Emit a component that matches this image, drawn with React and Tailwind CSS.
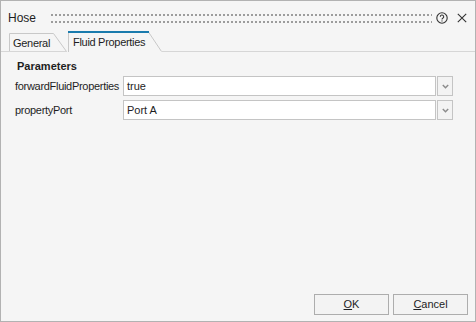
import React from 'react';

const Grip = () => (
  <svg className="block w-full h-[9px]">
    <defs>
      <pattern id="grip" width="4" height="7" patternUnits="userSpaceOnUse">
        <rect width="2" height="2" fill="#9c9c9c" />
      </pattern>
    </defs>
    <rect width="100%" height="9" fill="url(#grip)" />
  </svg>
);

const HelpIcon = () => (
  <svg width="12" height="12" viewBox="0 0 12 12" fill="none" stroke="#333" strokeWidth="1.1">
    <circle cx="6" cy="6" r="5.2" />
    <path d="M4.3 4.7a1.7 1.7 0 1 1 2.5 1.5c-.5.3-.8.6-.8 1.2" />
    <circle cx="6" cy="8.9" r="0.6" fill="#333" stroke="none" />
  </svg>
);

const CloseIcon = () => (
  <svg width="10" height="10" viewBox="0 0 10 10" stroke="#333" strokeWidth="1.1">
    <path d="M0.8 0.8L9.2 9.2M9.2 0.8L0.8 9.2" />
  </svg>
);

const Chevron = () => (
  <svg width="7" height="5" viewBox="0 0 7 5" fill="none" stroke="#8c8c8c" strokeWidth="1.5">
    <path d="M0.8 1L3.5 3.7L6.2 1" />
  </svg>
);

const ComboRow = ({ label, value }) => (
  <div className="flex items-center h-[20px]">
    <div className="w-[108px] text-[11px] tracking-[-0.3px] whitespace-nowrap">{label}</div>
    <div className="w-[313px] h-[20px] bg-white border border-[#c4c4c4] flex items-center pl-[3px] text-[11px]">
      {value}
    </div>
    <div className="w-[16px] h-[20px] ml-[1px] border border-[#c4c4c4] bg-[#f3f3f3] flex items-center justify-center">
      <Chevron />
    </div>
  </div>
);

export default function App() {
  return (
    <div className="w-[476px] h-[322px] border border-[#b2b2b2] bg-[#f5f5f5] flex flex-col text-[#1e1e1e] font-['Liberation_Sans',Arial,sans-serif]">
      {/* Title bar */}
      <div className="h-[30px] flex items-center pt-[4px] pl-[7px] pr-[8px]">
        <span className="text-[12px]">Hose</span>
        <div className="flex-1 ml-[15px] mr-[4px] pt-[1px]">
          <Grip />
        </div>
        <HelpIcon />
        <div className="ml-[9px]">
          <CloseIcon />
        </div>
      </div>

      {/* Tabs */}
      <div className="h-[21px] flex items-end">
        <div className="w-[8px] h-full border-b border-[#d6d6d6]" />
        <div className="relative w-[58px] h-[19px] pl-[4px] text-[11px] tracking-[-0.3px] flex items-center">
          <svg className="absolute inset-0" width="58" height="19" viewBox="0 0 58 19" fill="none">
            <path d="M0.5 19V0.5H44.5L57.5 18.5" stroke="#c8c8c8" />
            <path d="M0 18.5H58" stroke="#d6d6d6" />
          </svg>
          <span className="relative pt-[1px]">General</span>
        </div>
        <div className="relative w-[94px] h-[21px] ml-[1px] pl-[5px] text-[11px] tracking-[-0.3px] flex items-center">
          <svg className="absolute inset-0" width="94" height="21" viewBox="0 0 94 21" fill="none">
            <path d="M0.5 21V1H80.5L93.5 20.5" stroke="#c8c8c8" />
            <path d="M0 1H81" stroke="#1a7bad" strokeWidth="2" />
          </svg>
          <span className="relative pt-[2px]">Fluid Properties</span>
        </div>
        <div className="flex-1 h-full border-b border-[#d6d6d6]" />
      </div>

      {/* Content */}
      <div className="pl-[14px] pt-[7px] flex flex-col">
        <div className="pl-[2px] text-[11px] font-bold leading-[14px]">Parameters</div>
        <div className="mt-[3px] flex flex-col gap-[4px]">
          <ComboRow label="forwardFluidProperties" value="true" />
          <ComboRow label="propertyPort" value="Port A" />
        </div>
      </div>

      {/* Buttons */}
      <div className="mt-auto flex justify-end gap-[4px] pr-[7px] pb-[6px]">
        <button className="w-[75px] h-[21px] border border-[#adadad] bg-[#f3f3f3] text-[11px] text-[#1e1e1e]">
          <span className="underline">O</span>K
        </button>
        <button className="w-[75px] h-[21px] border border-[#adadad] bg-[#f3f3f3] text-[11px] text-[#1e1e1e]">
          <span className="underline">C</span>ancel
        </button>
      </div>
    </div>
  );
}
